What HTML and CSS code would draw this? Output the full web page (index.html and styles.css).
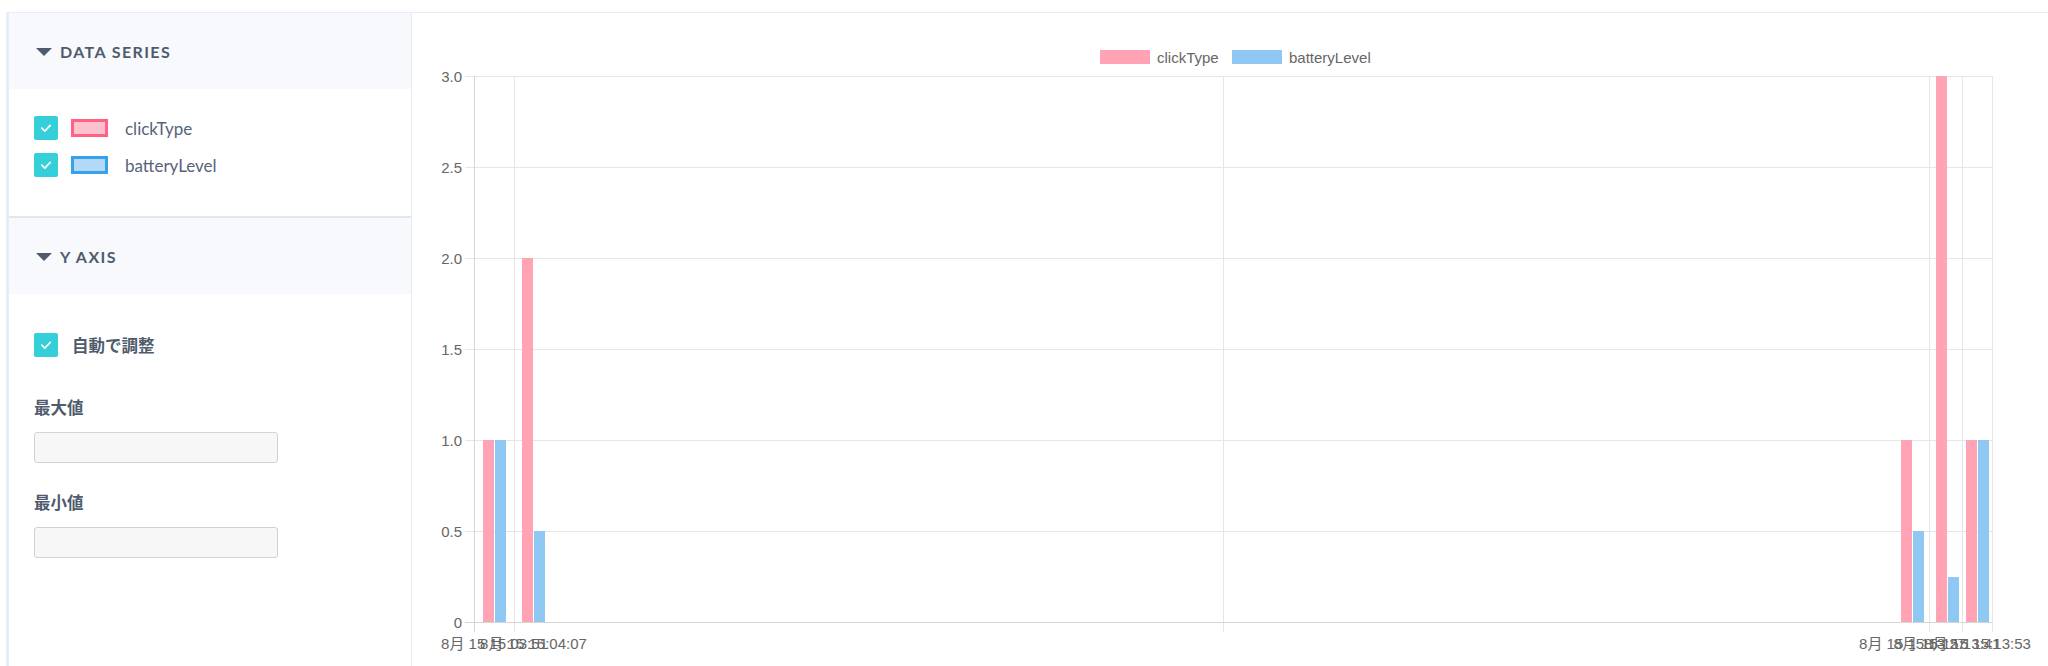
FILE: index.html
```html
<!DOCTYPE html>
<html lang="ja">
<head>
<meta charset="utf-8">
<title>Chart</title>
<link rel="stylesheet" href="styles.css">
</head>
<body>
<div class="page">
  <aside class="sidebar">
    <section class="section">
      <div class="section-head">
        <span class="caret"></span>
        <span class="section-title">DATA SERIES</span>
      </div>
      <div class="section-body series-body">
        <div class="series-row">
          <span class="check"><svg viewBox="0 0 24 24" width="24" height="24"><path d="M7.8 12.2l3 3 5.4-5.8" fill="none" stroke="#fff" stroke-width="1.7" stroke-linecap="round" stroke-linejoin="round"/></svg></span>
          <span class="swatch swatch-pink"></span>
          <span class="series-name">clickType</span>
        </div>
        <div class="series-row">
          <span class="check"><svg viewBox="0 0 24 24" width="24" height="24"><path d="M7.8 12.2l3 3 5.4-5.8" fill="none" stroke="#fff" stroke-width="1.7" stroke-linecap="round" stroke-linejoin="round"/></svg></span>
          <span class="swatch swatch-blue"></span>
          <span class="series-name">batteryLevel</span>
        </div>
      </div>
    </section>
    <section class="section section-last">
      <div class="section-head">
        <span class="caret"></span>
        <span class="section-title">Y AXIS</span>
      </div>
      <div class="section-body axis-body">
        <div class="auto-row">
          <span class="check"><svg viewBox="0 0 24 24" width="24" height="24"><path d="M7.8 12.2l3 3 5.4-5.8" fill="none" stroke="#fff" stroke-width="1.7" stroke-linecap="round" stroke-linejoin="round"/></svg></span>
          <span class="auto-label">自動で調整</span>
        </div>
        <div class="field">
          <label class="field-label">最大値</label>
          <input class="field-input" type="text">
        </div>
        <div class="field">
          <label class="field-label">最小値</label>
          <input class="field-input" type="text">
        </div>
      </div>
    </section>
  </aside>
  <main class="chart-panel">
    <svg class="chart" width="1636" height="654" viewBox="412 12 1636 654">
      <!-- legend -->
      <rect x="1100" y="50" width="50" height="14" fill="#ffa3b5"/>
      <text class="legend-text" x="1157" y="62.5">clickType</text>
      <rect x="1232" y="50" width="50" height="14" fill="#8fc8f2"/>
      <text class="legend-text" x="1289" y="62.5">batteryLevel</text>

      <!-- horizontal grid -->
      <g stroke="#e6e6e6" stroke-width="1">
        <line x1="465" y1="76.5" x2="1993" y2="76.5"/>
        <line x1="465" y1="167.5" x2="1993" y2="167.5"/>
        <line x1="465" y1="258.5" x2="1993" y2="258.5"/>
        <line x1="465" y1="349.5" x2="1993" y2="349.5"/>
        <line x1="465" y1="440.5" x2="1993" y2="440.5"/>
        <line x1="465" y1="531.5" x2="1993" y2="531.5"/>
      </g>
      <!-- vertical grid -->
      <g stroke="#e6e6e6" stroke-width="1">
        <line x1="514.5" y1="76" x2="514.5" y2="632"/>
        <line x1="1223.5" y1="76" x2="1223.5" y2="632"/>
        <line x1="1929.5" y1="76" x2="1929.5" y2="632"/>
        <line x1="1962.5" y1="76" x2="1962.5" y2="632"/>
        <line x1="1992.5" y1="76" x2="1992.5" y2="632"/>
      </g>
      <!-- axes -->
      <line x1="474.5" y1="76" x2="474.5" y2="632" stroke="#d6d6d6"/>
      <line x1="465" y1="622.5" x2="1993" y2="622.5" stroke="#d6d6d6"/>

      <!-- bars -->
      <g>
        <rect x="483" y="440" width="11" height="182" fill="#ffa3b5"/>
        <rect x="495" y="440" width="11" height="182" fill="#8fc8f2"/>
        <rect x="522" y="258" width="11" height="364" fill="#ffa3b5"/>
        <rect x="534" y="531" width="11" height="91" fill="#8fc8f2"/>
        <rect x="1901" y="440" width="11" height="182" fill="#ffa3b5"/>
        <rect x="1913" y="531" width="11" height="91" fill="#8fc8f2"/>
        <rect x="1936" y="76" width="11" height="546" fill="#ffa3b5"/>
        <rect x="1948" y="577" width="11" height="45" fill="#8fc8f2"/>
        <rect x="1966" y="440" width="11" height="182" fill="#ffa3b5"/>
        <rect x="1978" y="440" width="11" height="182" fill="#8fc8f2"/>
      </g>

      <!-- y labels -->
      <g class="tick-text" text-anchor="end">
        <text x="462" y="81.5">3.0</text>
        <text x="462" y="172.5">2.5</text>
        <text x="462" y="263.5">2.0</text>
        <text x="462" y="354.5">1.5</text>
        <text x="462" y="445.5">1.0</text>
        <text x="462" y="536.5">0.5</text>
        <text x="462" y="627.5">0</text>
      </g>
      <!-- x labels (centered on bar groups, overlapping as in the source) -->
      <g class="tick-text" text-anchor="middle">
        <text x="494.5" y="648.5">8月 15 15:03:51</text>
        <text x="533.5" y="648.5">8月 15 15:04:07</text>
        <text x="1912.5" y="648.5">8月 15 15:13:27</text>
        <text x="1947" y="648.5">8月 15 15:13:41</text>
        <text x="1977.5" y="648.5">8月 15 15:13:53</text>
      </g>
    </svg>
  </main>
</div>
</body>
</html>
```

FILE: styles.css
```css
* {
  box-sizing: border-box;
}

html, body {
  margin: 0;
  padding: 0;
  background: #ffffff;
}

body {
  width: 2048px;
  height: 666px;
  overflow: hidden;
  font-family: Lato, "Noto Sans", "Noto Sans CJK JP", sans-serif;
  color: #4f5b6d;
}

.page {
  display: flex;
  padding: 12px 0 0 6px;
  height: 666px;
}

.sidebar {
  width: 406px;
  flex: none;
  border-top: 1px solid #e6edf5;
  border-left: 3px solid #e6eef8;
  border-right: 1px solid #e6edf5;
  display: flex;
  flex-direction: column;
}

.section {
  border-bottom: 2px solid #dfe7f0;
}

.section-last {
  border-bottom: none;
  flex: 1;
}

.section-head {
  height: 76px;
  background: #f7f9fc;
  display: flex;
  align-items: center;
  padding-left: 27px;
  gap: 8px;
}

.caret {
  width: 0;
  height: 0;
  border-left: 8px solid transparent;
  border-right: 8px solid transparent;
  border-top: 8px solid #4f5b6d;
  margin-top: 1px;
}

.section-title {
  font-family: Lato, "Noto Sans", sans-serif;
  font-weight: 700;
  font-size: 16px;
  letter-spacing: 1.4px;
  color: #4f5b6d;
}

.series-body {
  padding: 27px 0 39px 25px;
  display: flex;
  flex-direction: column;
  gap: 13px;
}

.series-row {
  display: flex;
  align-items: center;
  height: 24px;
}

.check {
  width: 24px;
  height: 24px;
  border-radius: 2px;
  background: #35cfda;
  display: flex;
  flex: none;
}

.swatch {
  width: 37px;
  height: 18px;
  margin-left: 13px;
  border: 3px solid;
}

.swatch-pink {
  border-color: #ff6384;
  background: #ffc1ce;
}

.swatch-blue {
  border-color: #36a2eb;
  background: #b4d9f6;
}

.series-name {
  margin-left: 17px;
  font-size: 17px;
  color: #56637a;
}

.axis-body {
  padding: 38px 0 0 25px;
}

.auto-row {
  display: flex;
  align-items: center;
  height: 25px;
}

.auto-label {
  margin-left: 14px;
  font-family: "Noto Sans CJK JP", sans-serif;
  font-weight: 700;
  font-size: 16.5px;
  color: #4f5b6d;
}

.field {
  display: flex;
  flex-direction: column;
  margin-top: 38px;
}

.field + .field {
  margin-top: 27px;
}

.field-label {
  font-family: "Noto Sans CJK JP", sans-serif;
  font-weight: 700;
  font-size: 16.5px;
  color: #4f5b6d;
  line-height: 24px;
}

.field-input {
  margin-top: 13px;
  width: 244px;
  height: 31px;
  background: #f7f7f7;
  border: 1px solid #d2d2d2;
  border-radius: 3px;
  outline: none;
}

.chart-panel {
  flex: 1;
  border-top: 1px solid #e6edf5;
  position: relative;
  overflow: hidden;
}

.chart {
  display: block;
  margin-top: -1px;
}

.legend-text {
  font-family: "Liberation Sans", Arial, "Noto Sans CJK JP", sans-serif;
  font-size: 15px;
  fill: #666666;
}

.tick-text {
  font-family: "Liberation Sans", Arial, "Noto Sans CJK JP", sans-serif;
  font-size: 15px;
  fill: #666666;
}
```
